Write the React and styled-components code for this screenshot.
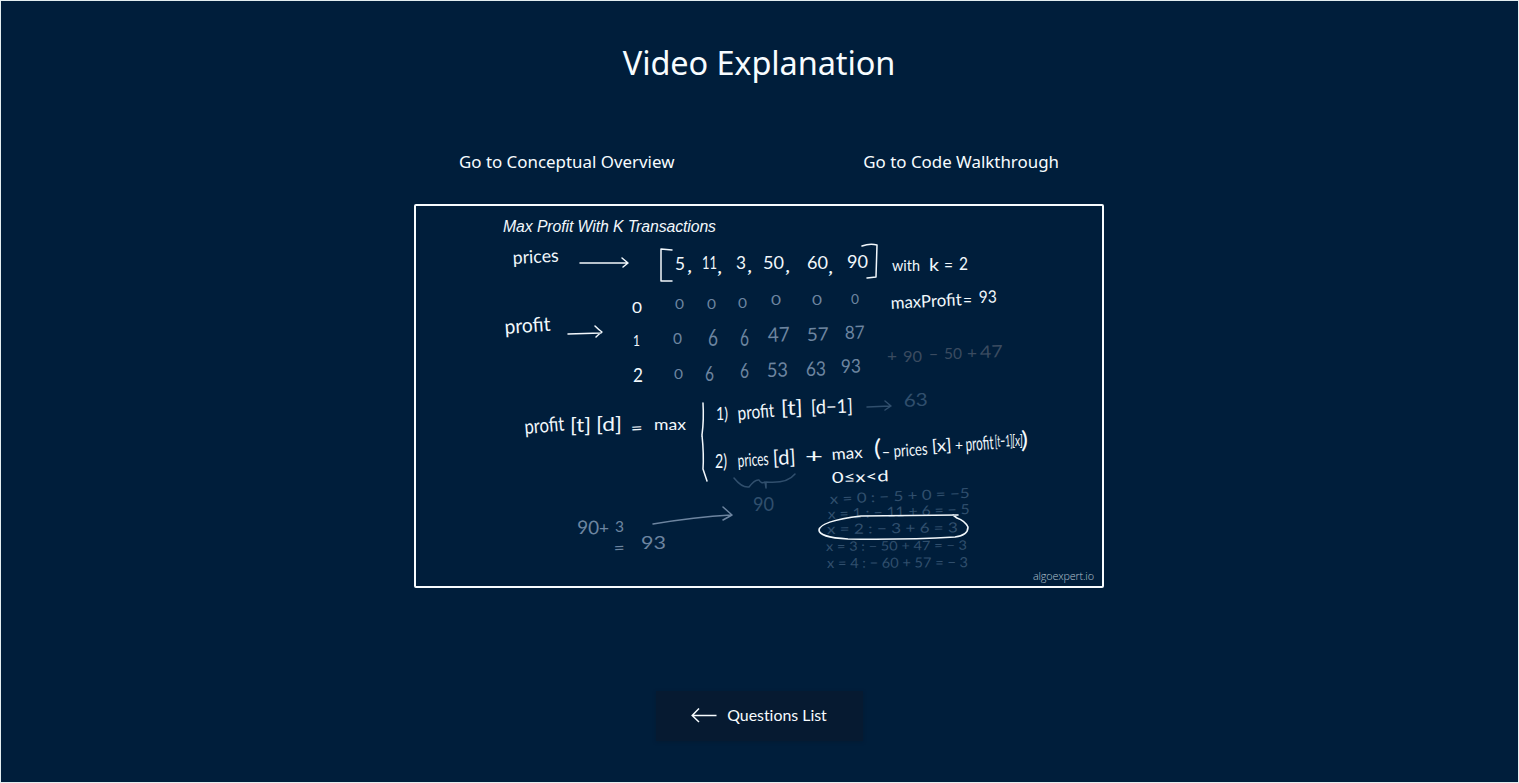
import React from "react";
import styled, { createGlobalStyle } from "styled-components";

const GlobalStyle = createGlobalStyle`
  *, *::before, *::after { box-sizing: border-box; }
  body { margin: 0; background: #001e3b; }
`;

const Page = styled.main`
  height: 783px;
  padding-right: 1px;
  display: flex;
  flex-direction: column;
  align-items: center;
  background: #001e3b;
  border: 1px solid #e3eef0;
  overflow: hidden;
  color: #f7fcff;
`;

const Title = styled.h1`
  margin: 38px 0 0;
  font: 400 32.5px/48px "Noto Sans", sans-serif;
  letter-spacing: -0.12px;
  white-space: nowrap;
`;

const LinkRow = styled.nav`
  width: 690px;
  margin-top: 63px;
  padding: 0 45px;
  display: flex;
  justify-content: space-between;
`;

const JumpLink = styled.a`
  font: 400 16.9px/24px "Noto Sans", sans-serif;
  white-space: nowrap;
`;

const VideoFrame = styled.section`
  width: 690px;
  height: 384px;
  margin-top: 30px;
  flex: none;
  border: 2px solid #f7fcff;
  border-radius: 2px;
`;

const Board = styled.svg`
  display: block;
  width: 686px;
  height: 380px;
`;

const tones = { white: "#f2f8fc", dim: "#6d85a0", faint: "#304f6d", grey: "#3a4b60" };

const Ink = styled.text`
  font-family: ${(p) => p.$family || "Lato"}, sans-serif;
  font-style: ${(p) => (p.$italic ? "italic" : "normal")};
  font-weight: ${(p) => p.$weight || 400};
  font-size: ${(p) => p.$size}px;
  fill: ${(p) => tones[p.$tone] || p.$tone};
`;

const Stroke = styled.path`
  fill: none;
  stroke: ${(p) => tones[p.$tone]};
  stroke-width: ${(p) => p.$width || 1.5};
  stroke-linecap: round;
  stroke-linejoin: round;
`;

const BackButton = styled.button`
  width: 207px;
  height: 50px;
  margin-top: 103px;
  padding: 0 0 2px;
  flex: none;
  display: flex;
  align-items: center;
  justify-content: center;
  gap: 10px;
  border: 0;
  background: #061a31;
  box-shadow: 0 1px 3px rgba(6, 24, 44, 0.5);
  color: #f7fcff;
  font: 400 15.9px/24px Lato, sans-serif;
  font-variant-ligatures: none;
`;

// Each entry: text, left, baseline, width, font size, tone, tilt in degrees
const notes = [
  ["prices", 513, 264, 46, 18, "white", -3],
  ["5", 675, 270, 10, 18, "white"],
  [",", 687, 272, 5, 20, "white", 10],
  ["11", 702, 269, 15, 17, "white"],
  [",", 717, 273, 5, 20, "white", 10],
  ["3", 736, 269, 10, 18, "white"],
  [",", 747, 272, 5, 20, "white", 10],
  ["50", 763, 269, 21, 18, "white"],
  [",", 785, 272, 5, 20, "white", 10],
  ["60", 807, 269, 21, 18, "white"],
  [",", 828, 273, 5, 20, "white", 10],
  ["90", 847, 268, 21, 18, "white"],
  ["with", 892, 271, 28, 16, "white"],
  ["k", 929, 271, 10, 17, "white"],
  ["=", 944, 271, 9, 15, "white"],
  ["2", 959, 270, 9, 17, "white"],
  ["maxProfit", 891, 309, 71, 17, "white", -3],
  ["=", 963, 306, 9, 15, "white"],
  ["93", 979, 303, 18, 17, "white", -2],
  ["profit", 505, 334, 46, 20, "white", -4],
  ["0", 632, 313, 10, 16, "white"],
  ["1", 633, 346, 7, 16, "white"],
  ["2", 633, 382, 10, 19, "white"],
  ["0", 675, 309, 9, 14, "dim"],
  ["0", 707, 309, 9, 14, "dim"],
  ["0", 738, 308, 9, 13, "dim"],
  ["0", 771, 305, 10, 13, "dim"],
  ["0", 812, 305, 10, 14, "dim"],
  ["0", 851, 304, 8, 14, "dim"],
  ["0", 673, 344, 9, 16, "dim"],
  ["6", 708, 346, 10, 23, "dim"],
  ["6", 740, 346, 9, 23, "dim"],
  ["47", 768, 342, 22, 20, "dim", -2],
  ["57", 807, 341, 22, 18, "dim", -2],
  ["87", 845, 339, 20, 18, "dim", -2],
  ["0", 674, 379, 9, 14, "dim"],
  ["6", 705, 381, 9, 22, "dim"],
  ["6", 740, 378, 9, 22, "dim"],
  ["53", 767, 377, 21, 20, "dim", -1],
  ["63", 806, 376, 20, 20, "dim", -1],
  ["93", 841, 373, 20, 19, "dim", -1],
  ["+", 887, 361, 10, 15, "grey"],
  ["90", 903, 362, 19, 16, "grey"],
  ["−", 929, 360, 9, 15, "grey"],
  ["50", 944, 359, 18, 16, "grey"],
  ["+", 967, 358, 10, 15, "grey"],
  ["47", 980, 358, 23, 17, "grey", -2],
  ["profit", 525, 434, 40, 20, "white", -5],
  ["[t]", 570, 432, 21, 20, "white"],
  ["[d]", 596, 431, 26, 20, "white"],
  ["=", 631, 434, 12, 16, "white", -3],
  ["max", 654, 430, 32, 16, "white"],
  ["1)", 716, 420, 12, 18, "white"],
  ["profit", 738, 420, 37, 19, "white", -5],
  ["[t]", 781, 415, 22, 20, "white", -2],
  ["[d−1]", 811, 414, 42, 19, "white", -2],
  ["63", 904, 407, 24, 18, "faint", -3],
  ["2)", 715, 468, 12, 19, "white"],
  ["prices", 738, 467, 31, 18, "white", -4],
  ["[d]", 773, 465, 23, 20, "white", -3],
  ["+", 805, 463, 18, 20, "white"],
  ["max", 832, 460, 31, 16, "white", -4],
  ["(", 874, 456, 7, 23, "white"],
  ["−", 882, 458, 8, 15, "white"],
  ["prices", 894, 457, 34, 17, "white", -4],
  ["[x]", 932, 452, 20, 17, "white", -4],
  ["+", 955, 450, 8, 14, "white"],
  ["profit", 966, 451, 28, 19, "white", -4],
  ["[t−1]", 995, 447, 18, 16, "white", -3],
  ["[x]", 1012, 446, 11, 15, "white"],
  [")", 1021, 448, 7, 23, "white"],
  ["0≤x<d", 832, 483, 57, 15, "white", -2],
  ["90", 753, 511, 21, 19, "faint"],
  ["90", 577, 534, 22, 19, "dim", 1],
  ["+", 599, 533, 10, 15, "dim"],
  ["3", 615, 532, 9, 16, "dim"],
  ["=", 614, 554, 11, 17, "dim", -3],
  ["93", 641, 549, 25, 18, "dim"],
  ["x = 0 : − 5 + 0 = −5", 830, 504, 140, 14, "faint", -2.5],
  ["x = 1 : − 11 + 6 = − 5", 828, 519, 142, 14, "faint", -2],
  ["x = 2 : − 3 + 6 = 3", 827, 534, 131, 14, "faint", -0.7],
  ["x = 3 : − 50 + 47 = − 3", 826, 551, 141, 13, "faint", -0.5],
  ["x = 4 : − 60 + 57 = − 3", 827, 568, 141, 14, "faint", -0.3],
];

// Each entry: path data, tone, line width
const marks = [
  ["M580 263 L627 263 M622 258 L628 263 L623 267", "white"],
  ["M672 250 L661 249 L661 281 L672 281", "white"],
  ["M862 246 Q870 243 877 245 L876 277 L867 278", "white"],
  ["M568 334 L601 333 M595 326 Q599 330 602 332 Q599 334 596 337", "white"],
  ["M703 403 Q704 420 702 435 Q704 455 703 469 L707 481 M702 434 L702 437", "white"],
  ["M867 407 L890 406 M885 401 L891 406 L885 410", "faint"],
  ["M734 478 Q742 488 749 487 Q755 479 759 480 Q761 484 765 482 L766 488 L766 482 Q787 484 795 474", "faint"],
  ["M653 524 Q695 517 731 515 M723 507 L732 515 L723 520", "dim"],
  ["M958 515 L861 516 C837 519 820 523 819 530 C819 534 827 538 848 539 Q905 540 955 537 C964 536 968 532 968 527 Q965 521 957 518 L953 515", "white", 1.6],
];

function Whiteboard() {
  return (
    <Board viewBox="416 206 686 380">
      <Ink $family="Liberation Sans" $italic $size={15.8} $tone="white" x={503} y={232} textLength={213}>
        Max Profit With K Transactions
      </Ink>
      {notes.map(([text, x, y, width, size, tone, tilt = 0], i) => (
        <Ink
          key={i}
          x={x}
          y={y}
          textLength={width}
          lengthAdjust="spacingAndGlyphs"
          transform={`rotate(${tilt} ${x} ${y})`}
          $size={size}
          $tone={tone}
        >
          {text}
        </Ink>
      ))}
      {marks.map(([d, tone, width], i) => (
        <Stroke key={i} d={d} $tone={tone} $width={width} />
      ))}
      <Ink $family="Open Sans" $weight={300} $size={10.8} $tone="#b4c3d0" x={1033} y={580} textLength={61}>
        algoexpert.io
      </Ink>
    </Board>
  );
}

function ArrowLeft() {
  return (
    <svg width="26" height="16" viewBox="0 0 26 16" fill="none" stroke="currentColor" strokeWidth="1.5">
      <path d="M8 1.5 L1.2 8.5 L8 15 M1.5 8.5 H25.5" />
    </svg>
  );
}

export default function App() {
  return (
    <>
      <GlobalStyle />
      <Page>
        <Title>Video Explanation</Title>
        <LinkRow>
          <JumpLink>Go to Conceptual Overview</JumpLink>
          <JumpLink>Go to Code Walkthrough</JumpLink>
        </LinkRow>
        <VideoFrame>
          <Whiteboard />
        </VideoFrame>
        <BackButton>
          <ArrowLeft />
          Questions List
        </BackButton>
      </Page>
    </>
  );
}
